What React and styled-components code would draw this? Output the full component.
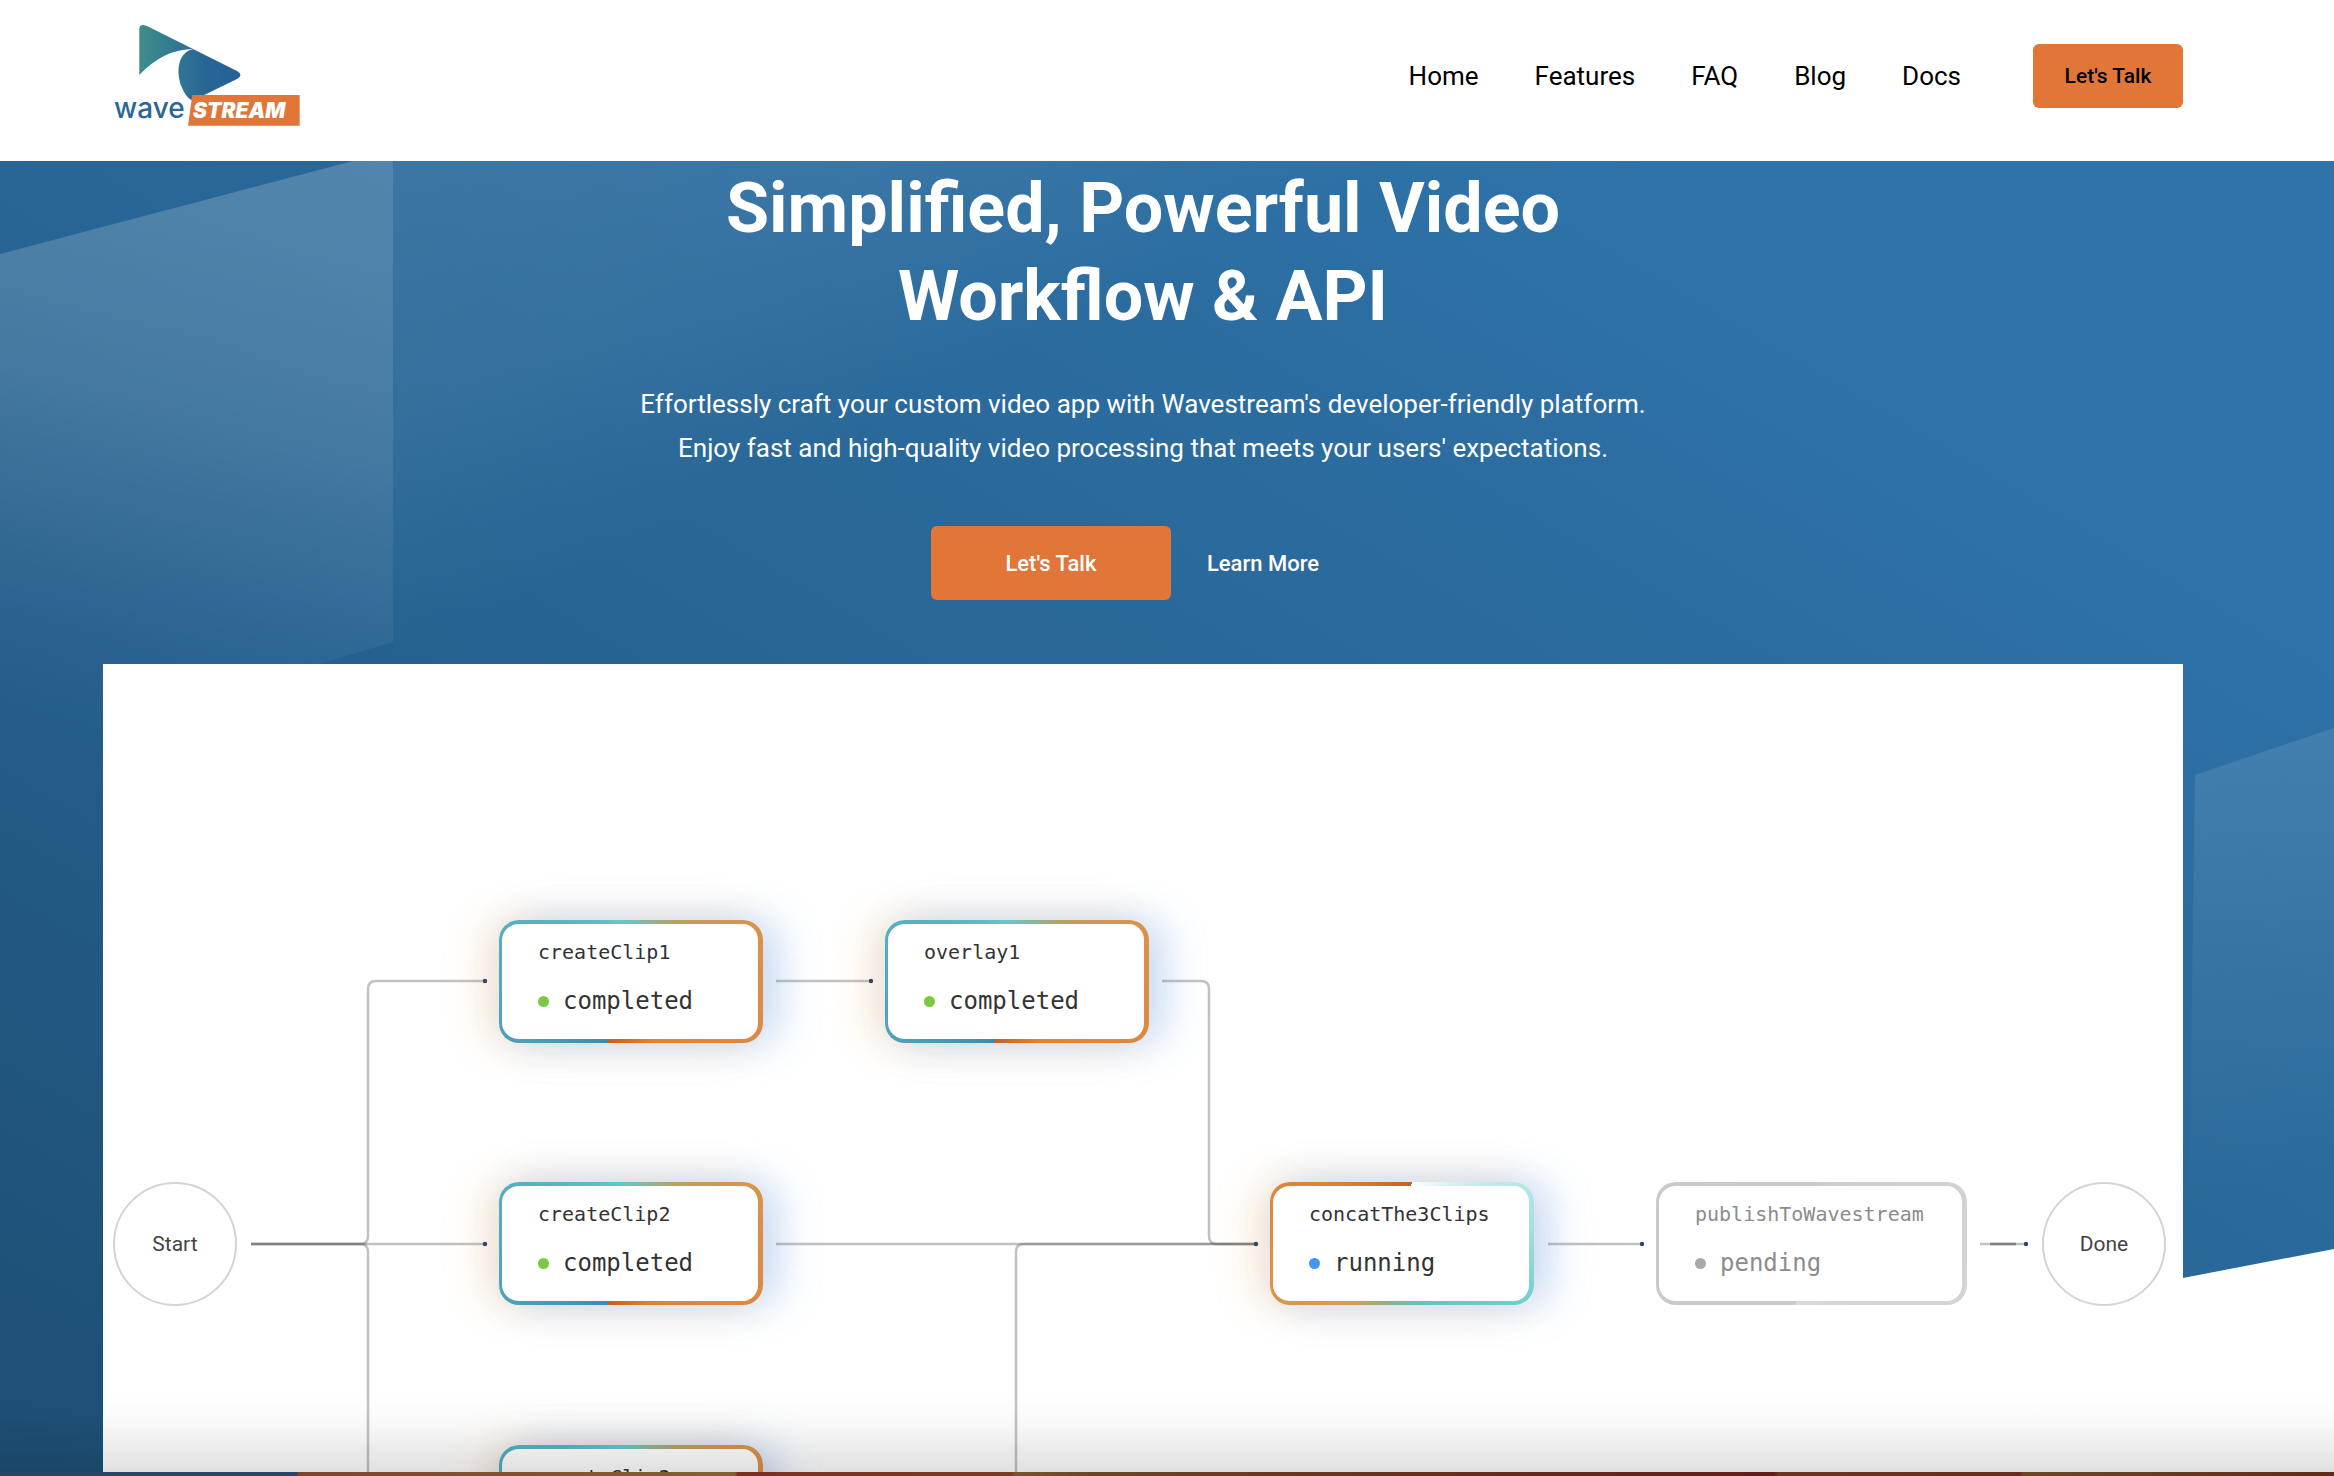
import React from "react";
import styled, { createGlobalStyle, css } from "styled-components";

const GlobalStyle = createGlobalStyle`
  *, *::before, *::after { box-sizing: border-box; }
  body {
    margin: 0;
    background: #fff;
    font-family: Roboto, "Liberation Sans", sans-serif;
    color: #000;
  }
  a { color: inherit; text-decoration: none; }
`;

const gutters = css`
  padding-left: 103px;
  padding-right: 151px;
`;

const Page = styled.div`
  position: relative;
  display: flex;
  flex-direction: column;
  height: 100vh;
  overflow: hidden;
`;

const Header = styled.header`
  ${gutters}
  display: flex;
  align-items: center;
  justify-content: space-between;
  height: 161px;
  flex: none;
  padding-bottom: 9px;
  background: #fff;
`;

const LogoLink = styled.a`
  display: block;
  line-height: 0;
  padding-left: 9px;
`;

const Nav = styled.nav`
  display: flex;
  align-items: center;
  gap: 72px;
`;

const NavList = styled.ul`
  display: flex;
  gap: 56px;
  margin: 0;
  padding: 0;
  list-style: none;
`;

const NavLink = styled.a`
  font-size: 26px;
  line-height: 32px;
`;

const Button = styled.button`
  display: inline-flex;
  align-items: center;
  justify-content: center;
  border: 0;
  border-radius: 6px;
  font-family: inherit;
  font-weight: 500;
  cursor: pointer;
  background: ${(p) => (p.$plain ? "transparent" : "#e17638")};
  color: ${(p) => (p.$dark ? "#000" : "#fff")};
  font-size: ${(p) => (p.$small ? 21 : 22)}px;
  height: ${(p) => (p.$small ? 64 : 74)}px;
  min-width: ${(p) => (p.$plain ? 0 : p.$small ? 150 : 240)}px;
  padding: 0 ${(p) => (p.$plain ? 36 : 24)}px;
`;

const Hero = styled.main`
  ${gutters}
  position: relative;
  flex: 1;
  min-height: 0;
  display: flex;
  flex-direction: column;
  padding-top: 3px;
`;

const Backdrop = styled.svg`
  position: absolute;
  inset: 0;
  width: 100%;
  height: 100%;
`;

const Intro = styled.section`
  position: relative;
  display: flex;
  flex-direction: column;
  align-items: center;
  text-align: center;
  color: #fff;
  margin-bottom: 64px;
`;

const Title = styled.h1`
  margin: 0 0 42px;
  max-width: 1000px;
  font-size: 70px;
  line-height: 88px;
  font-weight: 700;
`;

const Lead = styled.p`
  margin: 0 0 56px;
  max-width: 1040px;
  font-size: 26px;
  line-height: 44px;
`;

const Actions = styled.div`
  display: flex;
`;

const Card = styled.section`
  position: relative;
  flex: 1;
  min-height: 0;
  overflow: hidden;
  background: #fff;
`;

const Wires = styled.svg`
  position: absolute;
  left: 0;
  top: 0;
  width: 2080px;
  height: 1000px;
`;

const completedRing = `conic-gradient(from 201deg, #3d88b0, #4fa3bd 50deg, #58b4c4 110deg, #66c6ce 150deg,
  #8fb393 178deg, #b9a066 198deg, #d9934c 222deg, #dc8a42 270deg, #de8238 320deg, #c26028)`;
const runningRing = `conic-gradient(from 9deg, #fff, #bdeae8 48deg, #a4dedd 75deg, #70c9cb 112deg, #5fc4c5 150deg,
  #8fb08c 184deg, #cf9f58 212deg, #dd9248 245deg, #da823a 300deg, #c46224)`;
const pendingRing = `conic-gradient(from 195deg, #c9c9c9, #cacaca 150deg, #d2d2d2 240deg, #d8d8d8)`;
const rings = { completed: completedRing, running: runningRing, pending: pendingRing };
const dots = { completed: "#7ac943", running: "#4596f0", pending: "#aaa" };

const Node = styled.article`
  position: absolute;
  left: ${(p) => p.$x}px;
  top: ${(p) => p.$y}px;
  width: ${(p) => p.$w}px;
  height: 123px;
  padding: 15px 0 0 36px;
  border: solid transparent;
  border-width: 4px 5px 4px 3px;
  border-radius: 20px;
  background: linear-gradient(#fff, #fff) padding-box, ${(p) => rings[p.$status]} border-box;
  color: ${(p) => (p.$status === "pending" ? "#8c8c8c" : "#333")};
  box-shadow: ${(p) =>
    p.$status === "pending"
      ? "none"
      : "18px 0 40px rgba(90, 155, 245, 0.28), -16px 0 40px rgba(245, 175, 95, 0.24), 0 0 40px rgba(60, 80, 110, 0.07)"};
  font-family: "DejaVu Sans Mono", monospace;
`;

const NodeName = styled.h2`
  margin: 0 0 22px;
  font-size: 20px;
  line-height: 26px;
  font-weight: 400;
`;

const NodeStatus = styled.p`
  display: flex;
  align-items: center;
  gap: 14px;
  margin: 0;
  font-size: 24px;
  line-height: 28px;

  &::before {
    content: "";
    width: 11px;
    height: 11px;
    border-radius: 50%;
    background: ${(p) => dots[p.$status]};
  }
`;

const Terminal = styled.div`
  position: absolute;
  left: ${(p) => p.$x}px;
  top: 518px;
  width: 124px;
  height: 124px;
  display: flex;
  align-items: center;
  justify-content: center;
  border: 2px solid #d4d4d4;
  border-radius: 50%;
  background: #fff;
  color: #444;
  font-size: 21px;
`;

const BottomShade = styled.div`
  position: absolute;
  left: 0;
  right: 0;
  bottom: 4px;
  height: 84px;
  pointer-events: none;
  background: linear-gradient(rgba(0, 0, 0, 0), rgba(0, 0, 0, 0.02) 38%, rgba(0, 0, 0, 0.12));
`;

const BottomStrip = styled.div`
  height: 4px;
  flex: none;
  background: linear-gradient(
    90deg,
    #27456a 0 12.7%,
    #80432a 12.8%,
    #85602c 31.5%,
    #7f2e1c 31.6%,
    #7c3b1c 43.3%,
    #7c5228 43.5%,
    #6c4420 47%,
    #68301a 60%,
    #641c16 76%,
    #6c351c 76.2%,
    #692c1a 86.5%,
    #6d4722 86.7%,
    #602a14
  );
`;

const navItems = ["Home", "Features", "FAQ", "Blog", "Docs"];

const nodes = [
  { name: "createClip1", status: "completed", x: 396, y: 256, w: 264 },
  { name: "overlay1", status: "completed", x: 782, y: 256, w: 264 },
  { name: "createClip2", status: "completed", x: 396, y: 518, w: 264 },
  { name: "concatThe3Clips", status: "running", x: 1167, y: 518, w: 264 },
  { name: "publishToWavestream", status: "pending", x: 1553, y: 518, w: 311 },
  { name: "createClip3", status: "completed", x: 396, y: 781, w: 264 },
];

const wirePaths = [
  "M148 580H257Q265 580 265 572V325Q265 317 273 317H382",
  "M148 580H382",
  "M148 580H257Q265 580 265 588V1000",
  "M673 317H768",
  "M1059 317H1098Q1106 317 1106 325V572Q1106 580 1114 580H1153",
  "M673 580H1153",
  "M913 1000V588Q913 580 921 580H1153",
  "M1445 580H1539",
  "M1877 580H1923",
  "M1887 580H1913",
  "M1887 580H1913",
];

const wireEnds = [[382, 317], [382, 580], [768, 317], [1153, 580], [1539, 580], [1923, 580]];

function Logo() {
  return (
    <svg width="190" height="124" viewBox="0 0 190 124" role="img" aria-label="Wavestream">
      <defs>
        <linearGradient id="logoFill" gradientUnits="userSpaceOnUse" x1="27" y1="0" x2="129" y2="0">
          <stop offset="0" stopColor="#3e8e8c" />
          <stop offset="0.65" stopColor="#276696" />
          <stop offset="1" stopColor="#275f98" />
        </linearGradient>
      </defs>
      <path d="M27.300 61V15Q27.300 11 31 11Q33 11 36 12.500L81 35Q52 35 27.300 61Z" fill="url(#logoFill)" />
      <path d="M81 35L125 57Q132 61 125 65L85 84.500Q80 88 76 83.500C63 68 63 42 78 36Z" fill="url(#logoFill)" />
      <path d="M80.300 81H187.700V111.700H76Z" fill="#e17638" />
      <text x="2" y="104" fontFamily="Inter, sans-serif" fontSize="28" fontWeight="500" fill="#2a6799">
        wave
      </text>
      <text x="81" y="104" fontFamily="Inter, sans-serif" fontSize="21" fontWeight="900" fontStyle="italic" fill="#fff">
        STREAM
      </text>
    </svg>
  );
}

function HeroBackdrop() {
  return (
    <Backdrop viewBox="0 161 2334 1311" preserveAspectRatio="none" aria-hidden="true">
      <defs>
        <linearGradient id="base" gradientUnits="userSpaceOnUse" x1="300" y1="1600" x2="1300" y2="-100">
          <stop offset="0" stopColor="#1e4f75" />
          <stop offset="0.5" stopColor="#266493" />
          <stop offset="0.8" stopColor="#2c6da1" />
          <stop offset="1" stopColor="#2e74ab" />
        </linearGradient>
        <linearGradient id="pane" gradientUnits="userSpaceOnUse" x1="300" y1="220" x2="190" y2="760">
          <stop offset="0" stopColor="#fff" stopOpacity="0.19" />
          <stop offset="0.35" stopColor="#fff" stopOpacity="0.145" />
          <stop offset="0.8" stopColor="#fff" stopOpacity="0.03" />
          <stop offset="1" stopColor="#fff" stopOpacity="0" />
        </linearGradient>
        <linearGradient id="haze" gradientUnits="userSpaceOnUse" x1="393" y1="161" x2="600" y2="567">
          <stop offset="0" stopColor="#fff" stopOpacity="0.09" />
          <stop offset="0.5" stopColor="#fff" stopOpacity="0.065" />
          <stop offset="1" stopColor="#fff" stopOpacity="0" />
        </linearGradient>
        <linearGradient id="side" gradientUnits="userSpaceOnUse" x1="2210" y1="760" x2="2300" y2="1190">
          <stop offset="0" stopColor="#fff" stopOpacity="0.1" />
          <stop offset="1" stopColor="#fff" stopOpacity="0" />
        </linearGradient>
      </defs>
      <path d="M0 161H2334V1249L1134 1479H0Z" fill="url(#base)" />
      <path d="M0 254L353 161H393V642L230 690L0 860Z" fill="url(#pane)" />
      <path d="M393 161H1400V700H393Z" fill="url(#haze)" />
      <path d="M2195 775L2334 728V1249L2188 1277Z" fill="url(#side)" />
    </Backdrop>
  );
}

export default function App() {
  return (
    <>
      <GlobalStyle />
      <Page>
        <Header>
          <LogoLink href="#home">
            <Logo />
          </LogoLink>
          <Nav>
            <NavList>
              {navItems.map((item) => (
                <li key={item}>
                  <NavLink href={`#${item.toLowerCase()}`}>{item}</NavLink>
                </li>
              ))}
            </NavList>
            <Button $small $dark>Let's Talk</Button>
          </Nav>
        </Header>
        <Hero>
          <HeroBackdrop />
          <Intro>
            <Title>Simplified, Powerful Video Workflow &amp; API</Title>
            <Lead>
              Effortlessly craft your custom video app with Wavestream's developer-friendly platform. Enjoy fast and
              high-quality video processing that meets your users' expectations.
            </Lead>
            <Actions>
              <Button>Let's Talk</Button>
              <Button $plain>Learn More</Button>
            </Actions>
          </Intro>
          <Card>
            {nodes.map((n) => (
              <Node key={n.name} $x={n.x} $y={n.y} $w={n.w} $status={n.status}>
                <NodeName>{n.name}</NodeName>
                <NodeStatus $status={n.status}>{n.status}</NodeStatus>
              </Node>
            ))}
            <Wires viewBox="0 0 2080 1000" aria-hidden="true">
              {wirePaths.map((d, i) => (
                <path key={i} d={d} fill="none" stroke="#555" strokeOpacity="0.36" strokeWidth="2.500" />
              ))}
              {wireEnds.map(([x, y]) => (
                <circle key={`${x}-${y}`} cx={x} cy={y} r="2.200" fill="#2f4468" />
              ))}
            </Wires>
            <Terminal $x={10}>Start</Terminal>
            <Terminal $x={1939}>Done</Terminal>
          </Card>
        </Hero>
        <BottomShade />
        <BottomStrip />
      </Page>
    </>
  );
}
